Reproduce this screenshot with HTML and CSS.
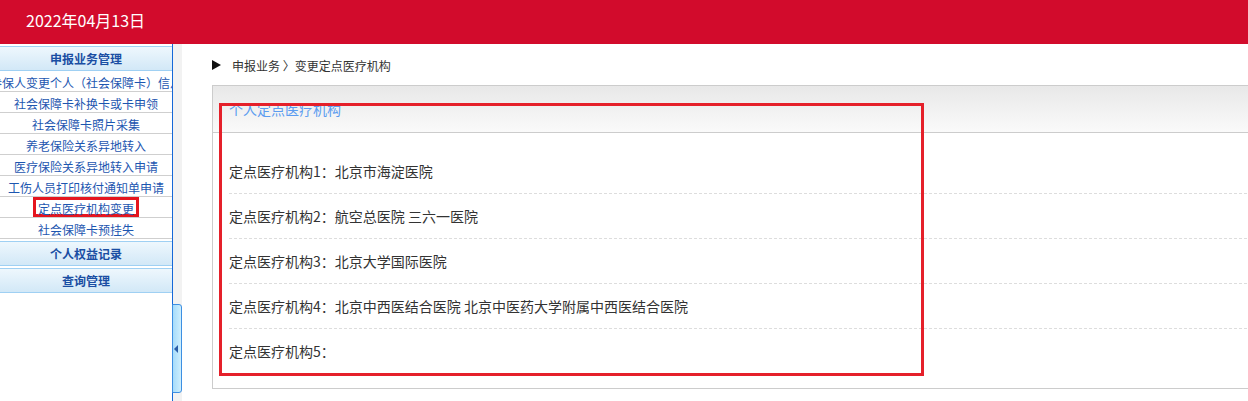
FILE: index.html
```html
<!DOCTYPE html>
<html>

<head>
    <meta charset="utf-8">
    <title>变更定点医疗机构</title>
    <link rel="stylesheet" href="styles.css">
</head>

<body>
    <div class="topbar">2022年04月13日</div>
    <div class="layout">
        <div class="sidebar">
            <div class="menu-group">
                <div class="menu-title">申报业务管理</div>
                <ul class="menu-list">
                    <li><a>参保人变更个人（社会保障卡）信息</a></li>
                    <li><a>社会保障卡补换卡或卡申领</a></li>
                    <li><a>社会保障卡照片采集</a></li>
                    <li><a>养老保险关系异地转入</a></li>
                    <li><a>医疗保险关系异地转入申请</a></li>
                    <li><a>工伤人员打印核付通知单申请</a></li>
                    <li><a class="current">定点医疗机构变更</a></li>
                    <li><a>社会保障卡预挂失</a></li>
                </ul>
            </div>
            <div class="menu-group">
                <div class="menu-title">个人权益记录</div>
            </div>
            <div class="menu-group">
                <div class="menu-title">查询管理</div>
            </div>
        </div>
        <div class="splitter">
            <span class="toggle"><i></i></span>
        </div>
        <div class="main">
            <div class="crumb"><span class="arrow"></span>申报业务 〉变更定点医疗机构</div>
            <div class="panel">
                <div class="panel-head">个人定点医疗机构</div>
                <div class="panel-body">
                    <div class="row">定点医疗机构1：北京市海淀医院</div>
                    <div class="row">定点医疗机构2：航空总医院 三六一医院</div>
                    <div class="row">定点医疗机构3：北京大学国际医院</div>
                    <div class="row">定点医疗机构4：北京中西医结合医院 北京中医药大学附属中西医结合医院</div>
                    <div class="row">定点医疗机构5：</div>
                </div>
                <div class="mark"></div>
            </div>
        </div>
    </div>
</body>

</html>
```

FILE: styles.css
```css
body {
    margin: 0;
    padding: 0;
    overflow: hidden;
    font-family: "Microsoft YaHei", "Noto Sans CJK SC", sans-serif;
    background-color: #fff;
}

.topbar {
    height: 44px;
    line-height: 40px;
    padding-left: 26px;
    background-color: #d20b2c;
    color: #fff;
    font-size: 16px;
}

.layout {
    display: flex;
    height: calc(100vh - 44px);
}

/* left menu */
.sidebar {
    width: 172px;
    flex-shrink: 0;
    border-right: 1px solid #1668d8;
    background-color: #fff;
}

.menu-title {
    margin-top: 2px;
    height: 23px;
    line-height: 24px;
    border-top: 1px solid #9fd0f3;
    border-bottom: 1px solid #9fd0f3;
    background: linear-gradient(#eef7fd, #d2e8f7);
    color: #1a4ea3;
    font-size: 12px;
    font-weight: bold;
    text-align: center;
}

.menu-list {
    list-style: none;
    margin: 0;
    padding: 0;
}

.menu-list li {
    display: flex;
    justify-content: center;
    height: 20px;
    line-height: 23px;
    border-bottom: 1px solid #cfcfcf;
    overflow: hidden;
    white-space: nowrap;
}

.menu-list a {
    flex-shrink: 0;
    color: #1d56b0;
    font-size: 12px;
    cursor: pointer;
}

.menu-list a.current {
    padding: 1px 2px;
    border: 3px solid #e5161f;
    line-height: 16px;
}

/* splitter between menu and content */
.splitter {
    position: relative;
    width: 9px;
    flex-shrink: 0;
    background-color: #f2f2f2;
}

.toggle {
    position: absolute;
    left: -1px;
    top: 260px;
    width: 8px;
    height: 87px;
    border: 1px solid #3d8fe2;
    border-radius: 0 3px 3px 0;
    background: linear-gradient(to right, #a6dcfb, #cdeefd);
}

.toggle i {
    position: absolute;
    left: 1px;
    top: 40px;
    border-right: 4px solid #2a5da8;
    border-top: 4px solid transparent;
    border-bottom: 4px solid transparent;
}

/* content */
.main {
    flex: 1;
    min-width: 0;
    padding-left: 30px;
}

.crumb {
    display: flex;
    align-items: center;
    height: 20px;
    padding: 11px 0 10px;
    color: #333;
    font-size: 12px;
}

.crumb .arrow {
    width: 0;
    height: 0;
    margin-right: 11px;
    border-left: 9px solid #111;
    border-top: 5px solid transparent;
    border-bottom: 5px solid transparent;
}

.panel {
    position: relative;
    margin-right: -20px;
    border: 1px solid #ccc;
}

.panel-head {
    height: 46px;
    line-height: 46px;
    padding-left: 16px;
    border-bottom: 1px solid #ccc;
    background: linear-gradient(#e8e8e8, #fafafa);
    color: #5b9cf0;
    font-size: 14px;
}

.panel-body {
    padding: 16px 0 15px 16px;
}

.row {
    height: 44px;
    line-height: 44px;
    border-bottom: 1px dashed #ddd;
    color: #333;
    font-size: 14px;
}

.row:last-child {
    border-bottom: none;
}

.mark {
    position: absolute;
    left: 6px;
    top: 17px;
    width: 705px;
    height: 273px;
    box-sizing: border-box;
    border: 3px solid #e5202a;
}
```
